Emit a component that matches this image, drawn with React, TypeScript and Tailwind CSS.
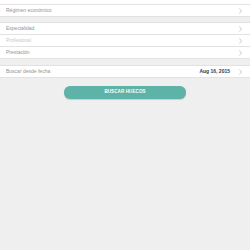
import { type JSX } from 'react';

interface RowProps {
  readonly label: string;
  readonly muted?: boolean;
  readonly value?: string;
}

function Chevron(): JSX.Element {
  return (
    <svg width="3" height="6" viewBox="0 0 3 6" className="shrink-0">
      <path d="M0.5 0.5 L2.5 3 L0.5 5.5" fill="none" stroke="#b5b5b5" strokeWidth="0.7" />
    </svg>
  );
}

function Row({ label, muted, value }: RowProps): JSX.Element {
  return (
    <div className="flex h-[12px] items-center justify-between border-b border-[#e2e2e2] bg-white pl-[6px] pr-[8px]">
      <span className={`text-[5px] leading-none ${muted ? 'text-[#c8c8c8]' : 'text-[#939393]'}`}>{label}</span>
      <div className="flex items-center gap-[9px]">
        {value && <span className="text-[5px] font-semibold leading-none text-[#3a3a3a]">{value}</span>}
        <Chevron />
      </div>
    </div>
  );
}

export default function App(): JSX.Element {
  return (
    <div className="h-[250px] w-[250px] overflow-hidden bg-[#efefef] font-['Liberation_Sans',Arial,sans-serif]">
      <div className="h-[5px] border-b border-[#e2e2e2] bg-white" />
      <Row label="Régimen económico" />
      <div className="h-[5px]" />
      <div className="border-t border-[#e2e2e2]">
        <Row label="Especialidad" />
        <Row label="Profesional" muted />
        <Row label="Prestación" />
      </div>
      <div className="h-[6px]" />
      <div className="border-t border-[#e2e2e2]">
        <Row label="Buscar desde fecha" value="Aug 16, 2015" />
      </div>
      <div className="flex justify-center pt-[8px]">
        <button
          type="button"
          className="flex h-[13px] w-[122px] items-center justify-center rounded-[6px] bg-[#5db3a7] text-[4.5px] font-bold tracking-wide text-white shadow-[0_1px_1px_rgba(0,0,0,0.15)]"
        >
          BUSCAR HUECOS
        </button>
      </div>
    </div>
  );
}
